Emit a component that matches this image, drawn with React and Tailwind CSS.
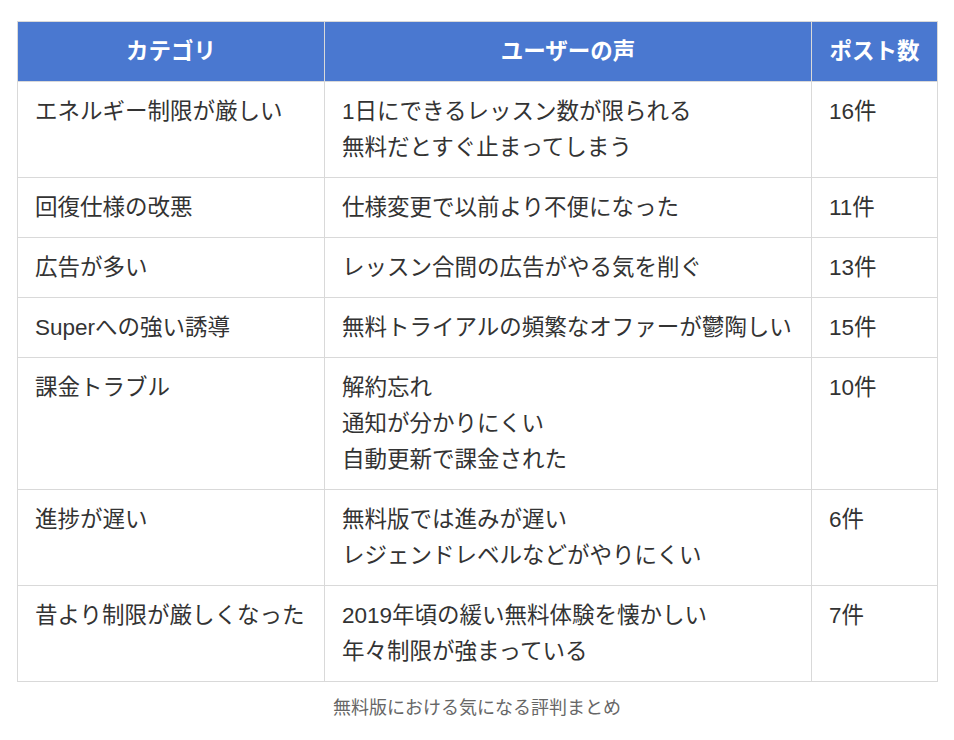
const rows = [
  { category: "エネルギー制限が厳しい", voices: ["1日にできるレッスン数が限られる", "無料だとすぐ止まってしまう"], count: "16件" },
  { category: "回復仕様の改悪", voices: ["仕様変更で以前より不便になった"], count: "11件" },
  { category: "広告が多い", voices: ["レッスン合間の広告がやる気を削ぐ"], count: "13件" },
  { category: "Superへの強い誘導", voices: ["無料トライアルの頻繁なオファーが鬱陶しい"], count: "15件" },
  { category: "課金トラブル", voices: ["解約忘れ", "通知が分かりにくい", "自動更新で課金された"], count: "10件" },
  { category: "進捗が遅い", voices: ["無料版では進みが遅い", "レジェンドレベルなどがやりにくい"], count: "6件" },
  { category: "昔より制限が厳しくなった", voices: ["2019年頃の緩い無料体験を懐かしい", "年々制限が強まっている"], count: "7件" },
];

const cell =
  "border border-[#d9d9d9] align-top pt-[12px] pb-[11px] px-[17px] text-[22.5px] leading-[36px] whitespace-nowrap";

export default function App() {
  return (
    <div
      className="bg-white w-[954px] min-h-[740px] pt-[21px] px-[17px] text-[#333]"
      style={{ fontFamily: '"Liberation Sans", "Noto Sans CJK JP", sans-serif' }}
    >
      <table className="w-[920px] border-collapse table-fixed">
        <colgroup>
          <col className="w-[307px]" />
          <col className="w-[487px]" />
          <col className="w-[126px]" />
        </colgroup>
        <thead>
          <tr className="bg-[#4a78d0] text-white">
            {["カテゴリ", "ユーザーの声", "ポスト数"].map((h) => (
              <th
                key={h}
                className="border border-[#d9d9d9] h-[60px] text-center font-bold text-[22.5px] leading-[36px] px-[17px]"
              >
                {h}
              </th>
            ))}
          </tr>
        </thead>
        <tbody>
          {rows.map((r) => (
            <tr key={r.category}>
              <td className={cell}>{r.category}</td>
              <td className={cell}>
                {r.voices.map((v) => (
                  <div key={v}>{v}</div>
                ))}
              </td>
              <td className={cell}>{r.count}</td>
            </tr>
          ))}
        </tbody>
      </table>
      <p className="text-center text-[#666] text-[18px] leading-[29px] mt-[12px]">
        無料版における気になる評判まとめ
      </p>
    </div>
  );
}
